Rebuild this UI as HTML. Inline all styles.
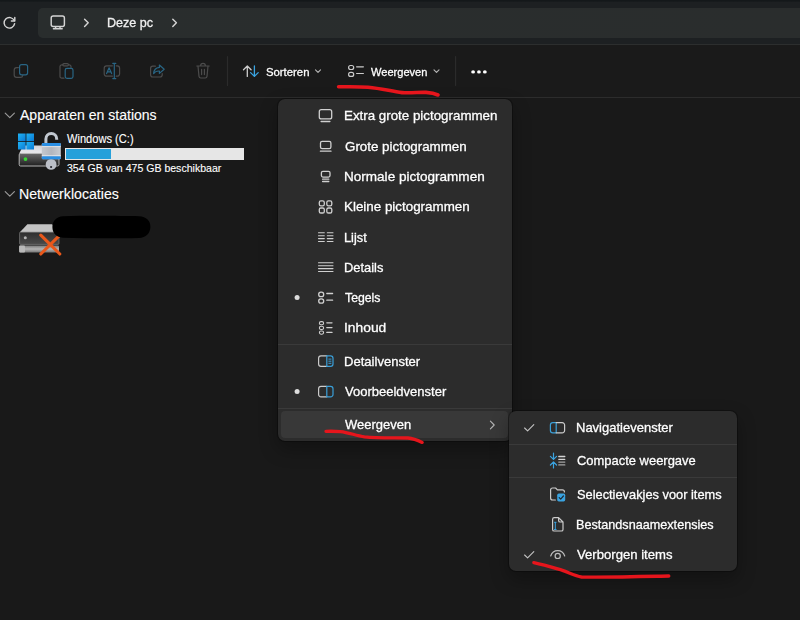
<!DOCTYPE html>
<html><head><meta charset="utf-8">
<style>
*{box-sizing:border-box;margin:0;padding:0}
html,body{width:800px;height:620px;overflow:hidden;background:#191919;font-family:"Liberation Sans",sans-serif;color:#fff}
.abs{position:absolute}
#top{left:0;top:0;width:800px;height:45px;background:linear-gradient(#14181a 0,#14181a 1px,#1d2022 2.5px,#1d2022 100%)}
#addr{left:38px;top:7.5px;width:770px;height:30px;background:linear-gradient(90deg,#292d2d,#2a2d2d);border-radius:5px 0 0 5px}
#tb{left:0;top:44.4px;width:800px;height:53.8px;background:#1a1a1a;border-top:1.4px solid #2c2e2e;border-bottom:1.8px solid #2c2c2c}
.t{position:absolute;white-space:nowrap;line-height:1;transform-origin:0 0;-webkit-text-stroke:.3px currentColor}
.t.l{-webkit-text-stroke:.12px currentColor}
.menu{position:absolute;background:#2c2c2c;border:1px solid rgba(0,0,0,.30);background-clip:padding-box;border-radius:8px;box-shadow:0 8px 18px rgba(0,0,0,.28)}
.sep{position:absolute;left:0;height:1px;background:#3a3a3a}
svg{position:absolute;left:0;top:0;overflow:visible}
</style></head><body>
<div id="top" class="abs"></div>
<div id="addr" class="abs"></div>
<div id="tb" class="abs"></div>

<!-- content widgets -->
<div class="abs" style="left:65px;top:147.6px;width:179.4px;height:12.2px;background:#e6e6e6"></div>
<div class="abs" style="left:66px;top:148.6px;width:44.6px;height:10.2px;background:#26a0da"></div>

<div class="t l" style="left:19.5px;top:108.1px;font-size:14.3px;color:#ffffff;transform:scaleX(0.9824)">Apparaten en stations</div>
<div class="t l" style="left:66.6px;top:133.44px;font-size:12px;color:#ffffff;transform:scaleX(0.9249)">Windows (C:)</div>
<div class="t l" style="left:66.6px;top:162.38px;font-size:11.6px;color:#ffffff;transform:scaleX(0.9102)">354 GB van 475 GB beschikbaar</div>
<div class="t l" style="left:19.01px;top:186.7px;font-size:14.3px;color:#ffffff;transform:scaleX(0.9899)">Netwerklocaties</div>

<!-- menu 1 -->
<div class="menu" id="m1" style="left:276.75px;top:97.75px;width:236.2px;height:344.6px">
  <div class="sep" style="top:245.3px;width:234.2px"></div>
  <div class="sep" style="top:308.9px;width:234.2px"></div>
  <div class="abs" style="left:3.4px;top:312.5px;width:226.9px;height:26.8px;background:#383838;border-radius:4px"></div>
</div>
<!-- menu 2 -->
<div class="menu" id="m2" style="left:508.4px;top:409.5px;width:229.4px;height:162.5px">
  <div class="sep" style="top:33.3px;width:227.4px"></div>
  <div class="sep" style="top:66.5px;width:227.4px"></div>
</div>

<div id="txt" style="position:absolute;left:0;top:0;width:800px;height:620px;will-change:transform;opacity:.999">
<div class="t" style="left:106.55px;top:16.24px;font-size:13.3px;color:#f0f0f0;transform:scaleX(0.9453)">Deze pc</div>
<div class="t" style="left:266.0px;top:66.08px;font-size:11.6px;color:#ffffff;transform:scaleX(0.9768)">Sorteren</div>
<div class="t" style="left:371.2px;top:66.08px;font-size:11.6px;color:#ffffff;transform:scaleX(0.9551)">Weergeven</div>
<div class="t" style="left:344.0px;top:109.26px;font-size:13.4px;color:#ffffff;transform:scaleX(0.996)">Extra grote pictogrammen</div>
<div class="t" style="left:345.0px;top:139.66px;font-size:13.4px;color:#ffffff;transform:scaleX(0.9971)">Grote pictogrammen</div>
<div class="t" style="left:343.99px;top:169.96px;font-size:13.4px;color:#ffffff;transform:scaleX(1.0111)">Normale pictogrammen</div>
<div class="t" style="left:344.0px;top:200.26px;font-size:13.4px;color:#ffffff;transform:scaleX(0.9993)">Kleine pictogrammen</div>
<div class="t" style="left:344.05px;top:230.56px;font-size:13.4px;color:#ffffff;transform:scaleX(0.9527)">Lijst</div>
<div class="t" style="left:344.04px;top:260.76px;font-size:13.4px;color:#ffffff;transform:scaleX(0.9631)">Details</div>
<div class="t" style="left:345.0px;top:290.96px;font-size:13.4px;color:#ffffff;transform:scaleX(0.9164)">Tegels</div>
<div class="t" style="left:343.97px;top:321.16px;font-size:13.4px;color:#ffffff;transform:scaleX(1.0314)">Inhoud</div>
<div class="t" style="left:344.02px;top:354.56px;font-size:13.4px;color:#ffffff;transform:scaleX(0.9751)">Detailvenster</div>
<div class="t" style="left:345.0px;top:384.96px;font-size:13.4px;color:#ffffff;transform:scaleX(0.9712)">Voorbeeldvenster</div>
<div class="t" style="left:344.7px;top:417.86px;font-size:13.4px;color:#ffffff;transform:scaleX(0.9692)">Weergeven</div>
<div class="t" style="left:576.03px;top:420.86px;font-size:13.4px;color:#ffffff;transform:scaleX(0.971)">Navigatievenster</div>
<div class="t" style="left:577.0px;top:454.26px;font-size:13.4px;color:#ffffff;transform:scaleX(0.9668)">Compacte weergave</div>
<div class="t" style="left:577.0px;top:487.66px;font-size:13.4px;color:#ffffff;transform:scaleX(0.9572)">Selectievakjes voor items</div>
<div class="t" style="left:576.06px;top:517.86px;font-size:13.4px;color:#ffffff;transform:scaleX(0.9435)">Bestandsnaamextensies</div>
<div class="t" style="left:577.0px;top:548.16px;font-size:13.4px;color:#ffffff;transform:scaleX(0.9794)">Verborgen items</div>

</div>

<svg width="800" height="620" viewBox="0 0 800 620" fill="none" stroke-linecap="round" stroke-linejoin="round">
<!-- ===== address bar icons ===== -->
<g stroke="#d4d4d4" stroke-width="1.45">
  <path d="M14.2 20.56 A5.3 5.3 0 1 0 14.62 23.72"/>
  <path d="M11.4 20.9 H14.8 V17.5"/>
  <rect x="51.2" y="15.9" width="13.2" height="10.6" rx="2"/>
  <path d="M55.6 26.6 V28.6 M60 26.6 V28.6 M53.4 28.7 H62.2"/>
  <path d="M84.6 19.2 L88.2 22.8 L84.6 26.4"/>
  <path d="M172.8 19.2 L176.4 22.8 L172.8 26.4"/>
</g>

<!-- ===== toolbar icons (disabled) ===== -->
<g stroke-width="1.2">
  <!-- copy -->
  <path stroke="#4c4c4c" d="M18.4 67.6 H16.6 A2.4 2.4 0 0 0 14.2 70 V75 A2.4 2.4 0 0 0 16.6 77.4 H20.4 A2.4 2.4 0 0 0 22.8 75.4"/>
  <rect stroke="#296584" x="19.6" y="64.6" width="8" height="10.2" rx="2"/>
  <!-- paste -->
  <path stroke="#4c4c4c" d="M63 64.8 H61.8 A1.8 1.8 0 0 0 60 66.6 V76.4 A1.8 1.8 0 0 0 61.8 78.2 H64 M68.6 64.8 H69.2 A1.8 1.8 0 0 1 71 66.6 V67.4"/>
  <rect stroke="#4c4c4c" x="62.8" y="63.6" width="5.6" height="2.2" rx="1.1"/>
  <rect stroke="#296584" x="65.2" y="68.4" width="7.8" height="10" rx="1.8"/>
  <!-- rename -->
  <path stroke="#4c4c4c" d="M112.4 65.8 H106.6 A2.4 2.4 0 0 0 104.2 68.2 V73.8 A2.4 2.4 0 0 0 106.6 76.2 H112.4 M116.2 65.8 H117.2 A2.4 2.4 0 0 1 119.6 68.2 V73.8 A2.4 2.4 0 0 1 117.2 76.2 H116.2"/>
  <path stroke="#296584" d="M106.6 73.6 L109.1 67.8 L111.6 73.6 M107.5 71.8 H110.7"/>
  <path stroke="#296584" d="M114.3 63.6 V78.4 M112.8 63.4 H115.8 M112.8 78.6 H115.8"/>
  <!-- share -->
  <path stroke="#4c4c4c" d="M155.4 66.2 H152.8 A2.2 2.2 0 0 0 150.6 68.4 V74.8 A2.2 2.2 0 0 0 152.8 77 H160 A2.2 2.2 0 0 0 162.2 74.8 V73.6"/>
  <path stroke="#296584" d="M159.4 65 L164.2 69.2 L159.4 73.4 V71 C156.6 70.8 154.8 71.8 153.6 73.6 C153.8 70.2 155.8 67.8 159.4 67.4 Z"/>
  <!-- trash -->
  <path stroke="#4c4c4c" d="M196.8 66 H209.2 M200.6 65.8 A2.4 2.4 0 0 1 205.4 65.8 M198 66.2 L199 76.4 A1.8 1.8 0 0 0 200.8 78 H205.2 A1.8 1.8 0 0 0 207 76.4 L208 66.2 M201.6 69.4 V74.6 M204.4 69.4 V74.6"/>
</g>
<path stroke="#2b2b2b" stroke-width="1.2" d="M227.5 56.5 V85.5 M455.6 56.5 V85.5"/>
<!-- sort -->
<g stroke-width="1.3">
  <path stroke="#cdcdcd" d="M247.3 66 V76.4 M243.5 69.8 L247.3 66 L251.1 69.8"/>
  <path stroke="#3aa3e0" d="M254.4 66 V76.4 M250.6 72.6 L254.4 76.4 L258.2 72.6"/>
</g>
<g stroke="#b4b4b4" stroke-width="1.15">
  <path d="M315.5 69.9 L318 72.4 L320.5 69.9"/>
  <path d="M434 69.9 L436.5 72.4 L439 69.9"/>
</g>
<!-- view icon (toolbar) -->
<g stroke="#cacaca" stroke-width="1.2">
  <rect x="348.6" y="65.5" width="5.1" height="4" rx="2"/>
  <rect x="348.6" y="72.4" width="5.1" height="4" rx="2"/>
  <path d="M356.6 66.8 H363.4 M356.6 73.5 H363.4"/>
</g>
<g fill="#ffffff" stroke="none">
  <ellipse cx="473.1" cy="71.9" rx="1.9" ry="1.6"/><ellipse cx="478.95" cy="71.9" rx="1.9" ry="1.6"/><ellipse cx="484.85" cy="71.9" rx="1.9" ry="1.6"/>
</g>

<!-- ===== section chevrons ===== -->
<g stroke="#9a9a9a" stroke-width="1.15">
  <path d="M5.2 113.2 L9.8 117.7 L14.4 113.2"/>
  <path d="M5.2 191.6 L9.8 196.2 L14.4 191.6"/>
</g>

<!-- ===== menu 1 icons ===== -->
<g stroke="#d0d0d0" stroke-width="1.3">
  <rect x="319.3" y="109.7" width="12.4" height="9.2" rx="2"/>
  <path stroke-width="1.5" d="M321.2 121.5 H329.8"/>
  <rect x="320.5" y="141.3" width="10.4" height="7.4" rx="1.6"/>
  <path d="M320.4 151.2 H331"/>
  <rect x="321.4" y="171.3" width="8.6" height="5.8" rx="1.5"/>
  <path d="M322.6 179.2 H328.8 M322.6 181.5 H328.8"/>
  <rect x="319.3" y="200.8" width="5" height="5" rx="1.6"/>
  <rect x="326.8" y="200.8" width="5" height="5" rx="1.6"/>
  <rect x="319.3" y="208" width="5" height="5" rx="1.6"/>
  <rect x="326.8" y="208" width="5" height="5" rx="1.6"/>
  <!-- list -->
  <path stroke-width="1.1" d="M318.5 232.8 H324.3 M318.5 235.7 H324.3 M318.5 238.6 H324.3 M318.5 241.5 H324.3 M327.3 232.8 H333 M327.3 235.7 H333 M327.3 238.6 H333 M327.3 241.5 H333"/>
  <!-- details -->
  <path stroke-width="1.1" d="M318.5 262.8 H333 M318.5 265.7 H333 M318.5 268.6 H333 M318.5 271.5 H333"/>
  <!-- tiles -->
  <rect x="318.7" y="292.2" width="5" height="4.4" rx="2.2"/>
  <rect x="318.7" y="298.8" width="5" height="4.4" rx="2.2"/>
  <path d="M326.8 293.5 H332.6 M326.8 300.2 H332.6"/>
  <!-- content -->
  <rect x="319.4" y="321.6" width="4.2" height="3.2" rx="1.6" stroke-width="1.1"/>
  <rect x="319.4" y="326.3" width="4.2" height="3.2" rx="1.6" stroke-width="1.1"/>
  <rect x="319.4" y="331" width="4.2" height="3.2" rx="1.6" stroke-width="1.1"/>
  <path d="M326.8 322.8 H332 M326.8 327.6 H332 M326.8 332.4 H332"/>
</g>
<!-- detail pane -->
<g stroke-width="1.2">
  <path stroke="#cbcbcb" d="M326.8 355.8 H321 A2.4 2.4 0 0 0 318.6 358.2 V364 A2.4 2.4 0 0 0 321 366.4 H326.8"/>
  <path stroke="#3a9fd8" d="M326.8 355.8 H330.6 A2.4 2.4 0 0 1 333 358.2 V364 A2.4 2.4 0 0 1 330.6 366.4 H326.8 Z"/>
  <path stroke="#3a9fd8" stroke-width="1" d="M328.8 359.1 H331 M328.8 361.2 H331 M328.8 363.3 H331"/>
  <path stroke="#cbcbcb" d="M326.8 386.4 H321 A2.4 2.4 0 0 0 318.6 388.8 V394.4 A2.4 2.4 0 0 0 321 396.8 H326.8"/>
  <path stroke="#3a9fd8" d="M326.8 386.4 H330.6 A2.4 2.4 0 0 1 333 388.8 V394.4 A2.4 2.4 0 0 1 330.6 396.8 H326.8 Z"/>
</g>
<g fill="#dcdcdc" stroke="none">
  <circle cx="297.1" cy="297.5" r="2.5"/><circle cx="297.1" cy="391.6" r="2.5"/>
</g>
<path stroke="#b4b4b4" stroke-width="1.1" d="M490.4 421.2 L494.2 425 L490.4 428.8"/>

<!-- ===== menu 2 icons ===== -->
<g stroke-width="1.2">
  <path stroke="#c4c4c4" stroke-width="1.1" d="M524.6 428 L527.6 430.9 L533.8 424.6"/>
  <path stroke="#c4c4c4" stroke-width="1.1" d="M524.6 555 L527.6 557.9 L533.8 551.6"/>
  <!-- nav pane -->
  <path stroke="#3a9fd8" d="M556.2 422.6 H552.8 A2.4 2.4 0 0 0 550.4 425 V430.4 A2.4 2.4 0 0 0 552.8 432.8 H556.2 Z"/>
  <path stroke="#cbcbcb" d="M556.2 422.6 H562.2 A2.4 2.4 0 0 1 564.6 425 V430.4 A2.4 2.4 0 0 1 562.2 432.8 H556.2"/>
  <!-- compact -->
  <path stroke="#3aa3e0" d="M553.5 453.2 V459.4 M550.4 456.4 L553.5 459.4 L556.6 456.4 M553.5 468 V462 M550.4 465 L553.5 462 L556.6 465"/>
  <path stroke="#d4d4d4" stroke-width="1.3" d="M558.8 456.5 H564.8 M558.8 459.3 H564.8"/>
  <path stroke="#a2a2a2" stroke-width="1.3" d="M558.8 462.1 H564.8 M558.8 464.9 H564.8"/>
  <!-- folder checkbox -->
  <path stroke="#cbcbcb" d="M555.4 500 H552.6 A2 2 0 0 1 550.6 498 V490 A2 2 0 0 1 552.6 488 H555.6 L557.4 489.8 H562.4 A2 2 0 0 1 564.4 491.8 V492"/>
  <rect x="557.2" y="493.6" width="8" height="7.8" rx="1.6" fill="#3aa3e0" stroke="none"/>
  <path stroke="#1f2a33" stroke-width="1.2" d="M559.2 497.6 L560.7 499.1 L563.4 496"/>
  <!-- file ext -->
  <path stroke="#cbcbcb" d="M558.6 517.6 H554.2 A1.6 1.6 0 0 0 552.6 519.2 V529.4 A1.6 1.6 0 0 0 554.2 531 H561.4 A1.6 1.6 0 0 0 563 529.4 V522 L558.6 517.6 V520.4 A1.6 1.6 0 0 0 560.2 522 H563"/>
  <path stroke="#3aa3e0" stroke-width="1" d="M555.3 522.4 V529.4 M554.5 522.3 H556.1 M554.5 529.5 H556.1"/>
  <!-- eye -->
  <path stroke="#bdbdbd" d="M550.7 556 C551.8 552.6 554.6 550.6 557.7 550.6 C560.8 550.6 563.6 552.6 564.7 556"/>
  <circle stroke="#bdbdbd" cx="557.7" cy="555.9" r="2.6"/>
</g>

<!-- ===== red annotation strokes ===== -->
<g stroke="#e6151c">
  <path stroke-width="3.6" d="M338.6 86.8 C350 86.6 360 86.6 368 87.2 C382 88.4 392 91.6 402 92.6 C410 93.3 420 92.1 426 92.4 C431 92.7 435 93.6 438 95"/>
  <path stroke-width="3.3" d="M326 431.3 C331 431.2 336 431.2 340.5 431.6 C349 432.6 356 435.6 364.5 436.8 C378 438.2 396 437.6 408 438 C413 438.4 418 440.4 422.2 442.4"/>
  <path stroke-width="3.3" d="M533.8 562.6 C545 565 553 567.6 562.5 570.4 C569 572.6 575 576 581.5 577 C610 577.4 640 576.6 668.8 576"/>
</g>

</svg>

<!-- ===== drive icons ===== -->
<svg width="800" height="620" viewBox="0 0 800 620">
<defs>
  <linearGradient id="gfront" x1="0" y1="0" x2="0" y2="1"><stop offset="0" stop-color="#6a6a6a"/><stop offset="1" stop-color="#1e1e1e"/></linearGradient>
  <linearGradient id="gtop" x1="0" y1="0" x2="0" y2="1"><stop offset="0" stop-color="#d2d2d6"/><stop offset="1" stop-color="#ececf0"/></linearGradient>
  <linearGradient id="gwin" x1="0" y1="0" x2="1" y2="1"><stop offset="0" stop-color="#1fb4f4"/><stop offset="1" stop-color="#0a78d4"/></linearGradient>
  <linearGradient id="glock" x1="0" y1="0" x2="1" y2="0"><stop offset="0" stop-color="#c4c8ce"/><stop offset=".5" stop-color="#b2b6be"/><stop offset="1" stop-color="#c8ccd2"/></linearGradient>
  <linearGradient id="gnfront" x1="0" y1="0" x2="0" y2="1"><stop offset="0" stop-color="#2e2e2e"/><stop offset="1" stop-color="#4a4a4a"/></linearGradient>
  <linearGradient id="gpipe" x1="0" y1="0" x2="0" y2="1"><stop offset="0" stop-color="#7c7c7c"/><stop offset=".5" stop-color="#b4b4b4"/><stop offset="1" stop-color="#767676"/></linearGradient>
</defs>
<!-- C: drive -->
<path d="M23.2 145.6 H56 L59 153.6 H19.2 Z" fill="url(#gtop)"/>
<rect x="19.2" y="153.4" width="39.8" height="12.6" rx="1.4" fill="url(#gfront)" stroke="#c6c6c6" stroke-width=".9"/>
<circle cx="25.5" cy="159.1" r="1.9" fill="#35d832"/>
<rect x="18" y="133.5" width="7.6" height="7.6" fill="url(#gwin)"/>
<rect x="26.4" y="133.5" width="7.6" height="7.6" fill="url(#gwin)"/>
<rect x="18" y="141.9" width="7.6" height="7.6" fill="url(#gwin)"/>
<rect x="26.4" y="141.9" width="7.6" height="7.6" fill="url(#gwin)"/>
<circle cx="51.1" cy="164.4" r="5.4" fill="#bcc0c8"/>
<circle cx="51.1" cy="167" r="1.1" fill="#2a2a30"/>
<path d="M45.9 144 V138.9 A5.4 5.4 0 0 1 56.7 138.9 V139.7" fill="none" stroke="#c2c8d0" stroke-width="3"/>
<rect x="41.8" y="143" width="19" height="16.2" rx="1.2" fill="url(#glock)"/>
<rect x="41.8" y="143" width="19" height="3" rx="1" fill="#2a8fe4"/>
<rect x="41.8" y="156.2" width="19" height="3" rx="1" fill="#2a8fe4"/>
<path d="M41.8 146.6 H60.8 M41.8 155.6 H60.8" stroke="#e6e8ec" stroke-width=".8"/>
<!-- network drive -->
<path d="M27.4 224.2 H52.2 L59 232.4 H19.6 Z" fill="#c4c4c4"/>
<rect x="19.6" y="232.2" width="39.4" height="12.2" rx="1" fill="url(#gnfront)" stroke="#7c7c7c" stroke-width=".7"/>
<circle cx="25.3" cy="237.8" r="1.5" fill="#b4b4b4"/>
<rect x="19.2" y="245.6" width="39.8" height="6.8" rx="1" fill="url(#gpipe)"/>
<rect x="19.2" y="245.6" width="5.8" height="6.8" rx="1" fill="#b9b9b9"/>
<path d="M40.8 235.2 L59.8 254 M59.8 235.2 L40.8 254" stroke="#e9581b" stroke-width="3.1" stroke-linecap="round"/>
<path fill="#000" stroke="none" d="M63 216.3 C85 215.6 120 215.8 139 216.3 C146.5 216.7 150.6 221 150.4 227 C150.2 233.4 146 237.7 139 237.9 C115 238.5 85 238.3 63 237.7 C56.4 237.3 52.4 233 52.4 227 C52.4 221 56.6 216.7 63 216.3 Z"/>
</svg>
</body></html>
